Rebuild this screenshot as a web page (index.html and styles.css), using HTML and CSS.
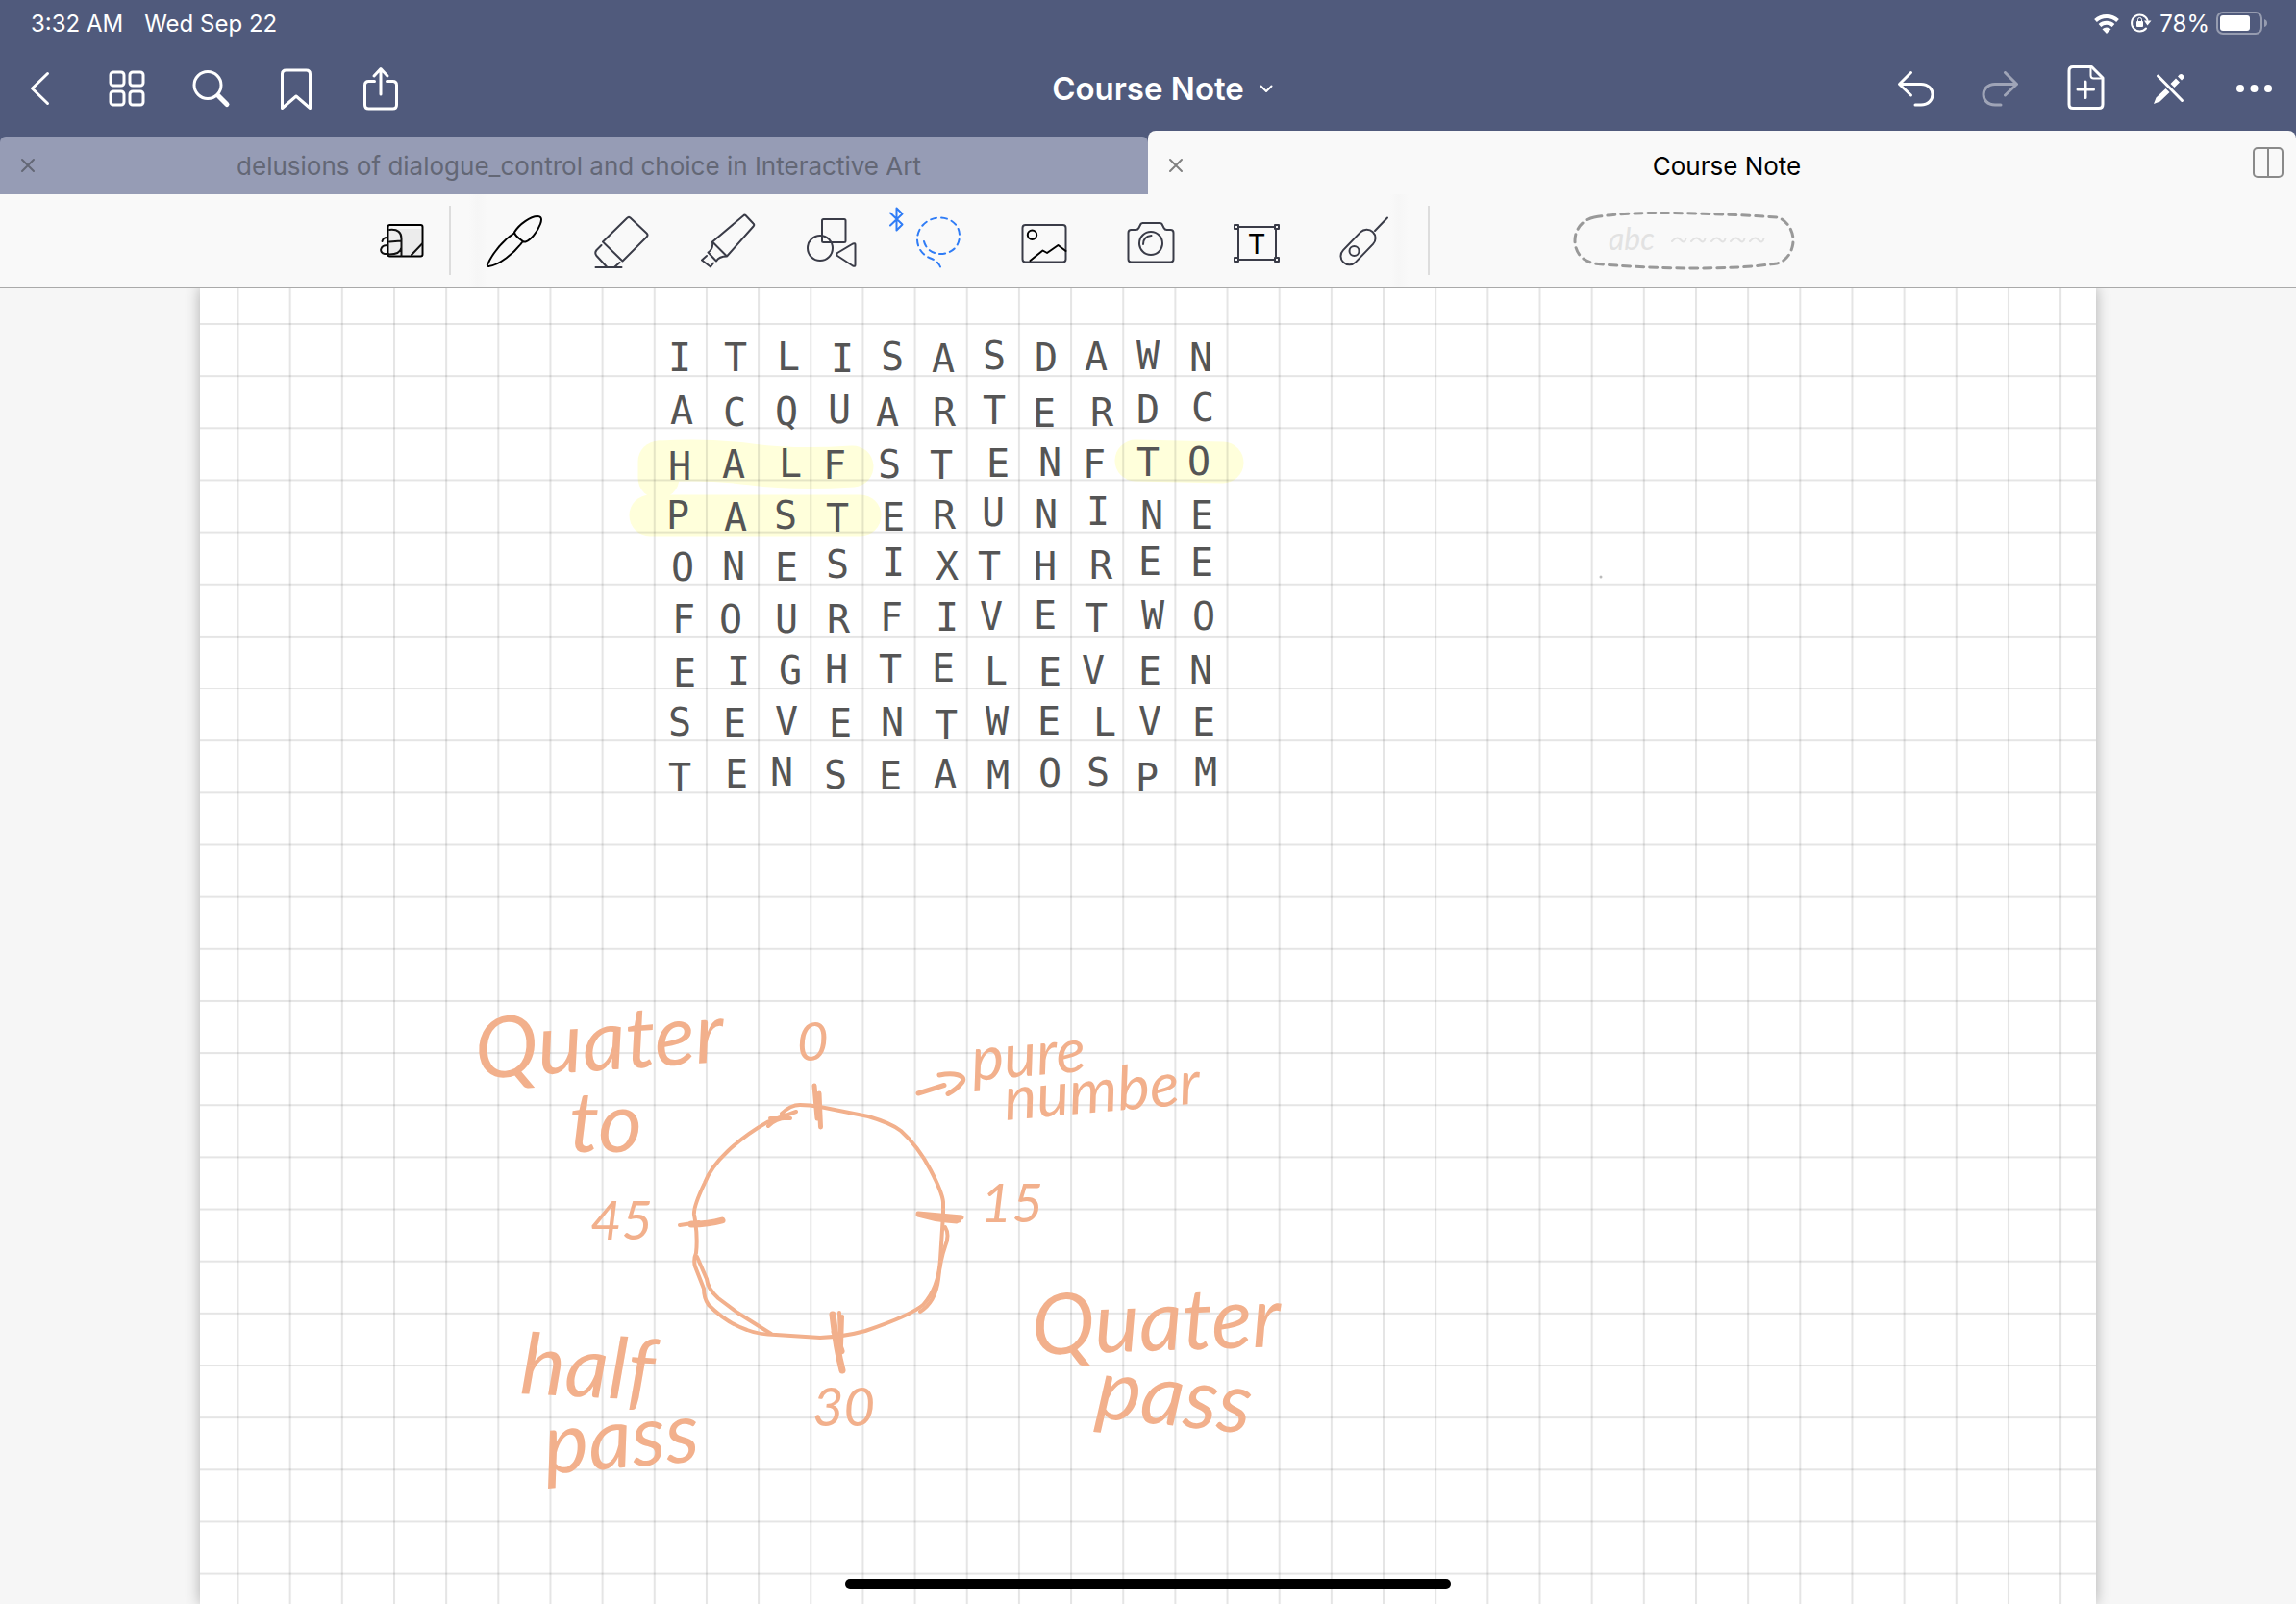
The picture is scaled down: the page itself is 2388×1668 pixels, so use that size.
FILE: index.html
```html
<!DOCTYPE html>
<html lang="en">
<head>
<meta charset="utf-8">
<meta name="viewport" content="width=device-width, initial-scale=1">
<title>Course Note</title>
<link rel="stylesheet" href="styles.css">
</head>
<body>
<header class="top">
  <div class="status">
    <span>3:32 AM</span>
    <span>Wed Sep 22</span>
    <span class="status-right">
      <svg class="wifi" viewBox="2178 13 29 21" aria-hidden="true">
        <path class="bar" d="M2180.500 20.500a17 17 0 0 1 23 0M2185 25.500a10.500 10.500 0 0 1 14 0"/>
        <path class="solid" d="M2192 34l-4.500-4.700a6.500 6.500 0 0 1 9 0z"/>
      </svg>
      <svg class="lock" viewBox="2214 12 24 24" aria-hidden="true">
        <path class="ring" d="M2233.500 21a8.500 8.500 0 1 0-1.500 8.500"/>
        <path class="solid" d="M2230 21.500h7.500l-4 5z"/>
        <rect class="solid" x="2222" y="22" width="7" height="6" rx="1"/>
        <path class="shackle" d="M2223.500 22v-1.500a2 2 0 0 1 4 0v1.500"/>
      </svg>
      <span class="percent">78%</span>
      <svg class="battery" viewBox="2304 11 56 26" aria-hidden="true">
        <rect class="shell" x="2306" y="13" width="46" height="22" rx="6"/>
        <rect class="solid" x="2309" y="16" width="31" height="16" rx="3"/>
        <path class="nub" d="M2355 20q3 1 3 4t-3 4z"/>
      </svg>
    </span>
  </div>
  <nav class="nav">
    <div class="group">
      <button class="nav-button" aria-label="Back"><svg viewBox="16 64 56 56"><path d="M49.500 76.500L33.500 92l16 15.500"/></svg></button>
      <button class="nav-button" aria-label="Thumbnails"><svg viewBox="104 64 56 56"><rect x="115" y="75" width="14" height="14" rx="3"/><rect x="135" y="75" width="14" height="14" rx="3"/><rect x="115" y="95" width="14" height="14" rx="3"/><rect x="135" y="95" width="14" height="14" rx="3"/></svg></button>
      <button class="nav-button" aria-label="Search"><svg viewBox="192 64 56 56"><circle cx="216" cy="88.500" r="14"/><path class="heavy" d="M227 99.500l9 9"/></svg></button>
      <button class="nav-button" aria-label="Bookmark"><svg viewBox="280 64 56 56"><path d="M293.500 112.500V77q0-4 4-4h21q4 0 4 4v35.500l-14.500-12.500z"/></svg></button>
      <button class="nav-button" aria-label="Share"><svg viewBox="368 64 56 56"><path d="M389.500 84.500h-6q-4 0-4 4v20.500q0 4 4 4h25q4 0 4-4v-20.500q0-4-4-4h-6M396 98V72M389 79l7-7.500 7 7.500"/></svg></button>
    </div>
    <button class="doc-title">Course Note
      <svg viewBox="1309 84 14 16" aria-hidden="true"><path d="M1310.500 89.500l5.500 5.500 5.500-5.500"/></svg>
    </button>
    <div class="group group-end">
      <button class="nav-button" aria-label="Undo"><svg viewBox="1964 64 56 56"><path d="M1987.500 75.500L1975.500 87.500l12 11.500M1976 87.500h22c16 0 16 21.500 0 21.500h-6"/></svg></button>
      <button class="nav-button" aria-label="Redo" disabled><svg viewBox="2052 64 56 56"><path d="M2085.500 75.500l12 12-12 11.500M2097 87.500h-22c-16 0-16 21.500 0 21.500h6"/></svg></button>
      <button class="nav-button" aria-label="Add page"><svg viewBox="2140 64 56 56"><path d="M2175.500 69.500h-19.500q-4 0-4 4v35q0 4 4 4h27q4 0 4-4v-27.500zM2169 85v16.500M2161 93h16.500"/><path class="thin" d="M2174.500 70v8.500q0 3 3 3h9"/></svg></button>
      <button class="nav-button" aria-label="Read-only mode"><svg viewBox="2228 64 56 56"><path d="M2244.500 79l25 25.500"/><path class="solid" d="M2252.500 92l4 4-10 9.500-6.500 2.500 2.500-6.500zM2263 81.500l4 4-5.500 5.500-4-4zM2265 79.500q3-4 5.500-1.500t-1.500 5.500z"/></svg></button>
      <button class="nav-button" aria-label="More"><svg viewBox="2316 64 56 56"><g class="solid"><circle cx="2330" cy="92" r="4"/><circle cx="2344.500" cy="92" r="4"/><circle cx="2359" cy="92" r="4"/></g></svg></button>
    </div>
  </nav>
  <div class="tabs">
    <div class="tab">
      <button class="tab-close" aria-label="Close tab"><svg viewBox="0 0 16 16"><path d="M2 2l12 12M14 2L2 14"/></svg></button>
      <a class="tab-name" href="#delusions">delusions of dialogue_control and choice in Interactive Art</a>
    </div>
    <div class="tab tab-current">
      <button class="tab-close" aria-label="Close tab"><svg viewBox="0 0 16 16"><path d="M2 2l12 12M14 2L2 14"/></svg></button>
      <a class="tab-name" href="#course" aria-current="page">Course Note</a>
      <button class="split" aria-label="Split view"><svg viewBox="0 0 32 32"><rect x="1" y="1" width="30" height="30" rx="4"/><path d="M16 1v30"/></svg></button>
    </div>
  </div>
</header>

<div class="toolbar">
  <div class="tools">
    <button class="tool mode" aria-label="Zoom window"><svg viewBox="385 218 64 64">
      <rect class="pane" x="404" y="238" width="33" height="28"/>
      <g class="dark"><rect x="402.500" y="234" width="36" height="32.500" rx="2"/></g>
      <path class="hair" d="M396.500 251q1-4 5-4M402 255c-8 0-9 8-3 9h4M404 239c9-1 12.500 3 12.500 9v18M404 251.500l12-1M404 264.500q11 0 12.500-7M427 265l11-11.500"/>
    </svg></button>
    <span class="divider"></span>
    <div class="strip">
      <button class="tool" aria-label="Pen"><svg viewBox="504 218 64 64"><path class="dark" d="M508.500 274.500C512 265 524 250 535 243M509 277c11-1 27-14 35-25M509 277q-2-1-.5-3M536 241.500C541 233 553 225 560 225q6 0 3 8c-3 8-10 17-15.500 18.500q-2 .5-4-1.500-7-5-7.500-8.500z"/></svg></button>
      <button class="tool" aria-label="Eraser"><svg viewBox="617 218 64 64"><path d="M655 227l-25 24.500 20.500 20 25-25q2-2 0-4l-17-16q-2-1.500-3.500.5zM628.500 255l-5 5q-2.500 3 0 6l10.500 11.500M647.500 273l-5 4.500M622.500 278h27"/></svg></button>
      <button class="tool" aria-label="Highlighter"><svg viewBox="725 218 64 64"><path d="M774 224.500l-32 27 15 15 27.500-31q1.500-1.500 0-3l-8-8.500q-1-1-2.500.5zM742 252q1 7-4.500 10.500l8.500 9q3-5 11-5M736 266l-5 4.500 9 7 3-4"/></svg></button>
      <button class="tool" aria-label="Shapes"><svg viewBox="837 218 64 64"><rect x="857" y="228" width="24.500" height="24" rx="1.500"/><circle cx="855" cy="258" r="13"/><path d="M889 253.500l-16 9.500q-1.500 1.500 0 3l16 10.500q2.500 1 2.500-1v-21q0-2-2.500-1z"/></svg></button>
      <button class="tool active" aria-label="Lasso">
        <svg viewBox="947 218 64 64"><path class="lasso" d="M963 251C965 259 972 264 980 264c12 0 20-8 20-19s-9-18.500-20.500-18.500c-13 0-23.500 10-23.500 22.500 0 9 6 17 15 20q7 3 9 8.500"/></svg>
        <svg class="bluetooth" viewBox="925 214 17 28" aria-hidden="true"><path d="M927 221.500l12.500 12-6 6v-23l6 6-12.500 12"/></svg>
      </button>
      <button class="tool" aria-label="Image"><svg viewBox="1056 218 64 64"><rect x="1064.500" y="234" width="45" height="38.500" rx="3"/><g class="dark"><circle cx="1074.500" cy="244.300" r="4.700"/><path d="M1072.500 271l13-10.500 4.500 2.500 11.500-8 8 6"/></g></svg></button>
      <button class="tool" aria-label="Camera"><svg viewBox="1167 218 64 64"><path d="M1177.500 239h5q2 0 3-2l2-4q.5-1 2-1h18q1.500 0 2 1l2 4q1 2 3 2h4q3 0 3 3v27.500q0 3-3 3h-41q-3 0-3-3V242q0-3 3-3z"/><circle cx="1198" cy="253" r="12"/><path d="M1190 254q0-8 8.500-9"/></svg></button>
      <button class="tool" aria-label="Text"><svg viewBox="1277 218 64 64"><rect x="1289" y="236" width="39" height="34"/><g class="knob"><rect x="1285" y="234" width="4" height="4"/><rect x="1327" y="234" width="4" height="4"/><rect x="1285" y="268" width="4" height="4"/><rect x="1327" y="268" width="4" height="4"/></g><text class="tee" x="1308" y="264">T</text></svg></button>
      <button class="tool" aria-label="Laser pointer"><svg viewBox="1388 218 64 64"><rect x="1391.500" y="248" width="44" height="18" rx="9" transform="rotate(-46 1413.500 257)"/><circle cx="1409.500" cy="261" r="5"/><path d="M1431 240l13-13.500"/></svg></button>
    </div>
    <span class="divider"></span>
    <svg class="preset" viewBox="1632 216 236 68" role="img" aria-label="Lasso selection">
      <path class="loop" d="M1657 226c23-4 48-4.500 71-4.500 40 0 90 2.500 120 4.500 9 3 16 13 16 24s-7 22-17 24c-27 4-57 5-87 5-34 0-73-2-103-5-13-3-20-12-20-24s9-22 20-24z"/>
      <text x="1672" y="260">abc</text>
      <path class="waves" d="M1738 251q5-6 9-1.500t5.500-1.500M1758 251q5-6 9-1.500t5.500-1.500M1779 251q5-6 9-1.500t5.500-1.500M1799 251q5-6 9-1.500t5.500-1.500M1819 251q5-6 9-1.500t5.500-1.500"/>
    </svg>
  </div>
</div>

<main class="canvas">
  <div class="page">
    <svg class="ink" viewBox="208 299 1972 1369">
      <defs>
        <pattern id="columns" patternUnits="userSpaceOnUse" x="246.500" y="0" width="54.160" height="60"><rect class="rule" width="2" height="60"/></pattern>
        <pattern id="rows" patternUnits="userSpaceOnUse" x="0" y="336" width="60" height="54.150"><rect class="rule" width="60" height="2"/></pattern>
      </defs>
      <g class="marker">
        <path d="M687 480q50-3 95 3t105 2"/>
        <path d="M685 480v17"/>
        <path d="M676 536h219"/>
        <path d="M1181 479l91 2"/>
      </g>
      <rect x="208" y="299" width="1972" height="1369" fill="url(#columns)"/>
      <rect x="208" y="299" width="1972" height="1369" fill="url(#rows)"/>

      <g class="letters">
        <text x="707 765 820 876 928 981 1034 1088 1140 1194 1249" y="386 386 385 387 385 387 384 386 385 384 386">ITLISASDAWN</text>
        <text x="709 764 818 873 923 982 1034 1086 1146 1194 1251" y="441 443 442 440 443 443 441 444 443 440 438">ACQUARTERDC</text>
        <text x="707 763 822 868 925 979 1038 1092 1138 1194 1247" y="499 497 496 498 497 498 496 495 497 495 494">HALFSTENFTO</text>
        <text x="705 765 817 871 929 982 1033 1088 1142 1198 1250" y="550 552 550 553 552 550 547 549 546 550 550">PASTERUNINE</text>
        <text x="710 763 818 871 929 985 1029 1087 1145 1196 1250" y="604 603 604 601 599 603 603 603 602 598 599">ONESIXTHREE</text>
        <text x="711 760 818 872 927 985 1031 1087 1140 1199 1252" y="658 658 658 658 656 656 655 654 657 654 655">FOURFIVETWO</text>
        <text x="712 768 822 870 926 981 1036 1092 1137 1196 1249" y="714 712 711 710 710 709 712 713 711 712 711">EIGHTELEVEN</text>
        <text x="707 764 818 874 928 984 1037 1091 1149 1196 1252" y="765 766 764 766 765 768 764 764 765 764 765">SEVENTWELVE</text>
        <text x="707 766 813 869 926 983 1038 1092 1142 1193 1254" y="823 819 817 820 821 819 820 818 817 823 817">TENSEAMOSPM</text>
      </g>

      <g class="dial">
        <path class="w4" d="M813 1158Q822 1149 832 1149Q842 1149 853 1151L903 1161Q927 1168 937 1176Q955 1192 968 1217Q980 1240 981 1250V1263L978 1310Q976 1340 960 1357Q947 1368 900 1384Q878 1390 853 1391L807 1388Q790 1388 777 1383Q756 1376 737 1357Q732 1350 732 1340L723 1317Q721 1310 724 1303Q726 1285 722 1263Q721 1255 733 1230Q739 1214 757 1197Q775 1180 798 1167L828 1156"/>
        <path class="w4" d="M725 1307l10 23q1 10 12 20l20 15 35 22M983 1276q5 8 0 20-5 14-7 34-3 24-19 34M799 1171q10-10 23-8M801 1163h18"/>
        <path class="w5" d="M847 1129l3 34M852 1137l1.500 35M955 1262l45 4M955 1263q20 6 40 7M965 1264l32 5"/>
        <path class="w4" d="M707 1274l20-3M873 1365l1 30M876 1369l-1 30"/>
        <path class="w6" d="M719 1273q18 0 32-4M866 1367q4 35 10 58M868 1385l7 20"/>
      </g>
      <path class="arrow" d="M955 1137l27-8.500M977 1118c15-3 28 0 24 7q-5 7-15 12.500"/>

      <g class="words">
        <text class="size-l" x="496" y="1122" transform="rotate(-4 496 1122)">Quater</text>
        <text class="size-l" x="592" y="1198">to</text>
        <text class="size-s" x="1012" y="1124" transform="rotate(-5 1012 1124)">pure</text>
        <text class="size-s" x="1046" y="1165" transform="rotate(-5 1046 1165)">number</text>
        <text class="size-l" x="540" y="1449" transform="rotate(3 540 1449)">half</text>
        <text class="size-l" x="568" y="1533" transform="rotate(-5 568 1533)">pass</text>
        <text class="size-l" x="1074" y="1409" transform="rotate(-2 1074 1409)">Quater</text>
        <text class="size-l" x="1138" y="1474" transform="rotate(6 1138 1474)">pass</text>
      </g>
      <g class="numbers">
        <text x="829" y="1103">0</text>
        <text x="1020" y="1271">15</text>
        <text x="845" y="1483">30</text>
        <text x="614" y="1289">45</text>
      </g>
      <circle class="speck" cx="1665" cy="600" r="1.500"/>
    </svg>
  </div>
</main>
<div class="home-bar"></div>
</body>
</html>
```
FILE: styles.css
```css
* { box-sizing: border-box; }

body {
  margin: 0;
  min-height: 100vh;
  display: flex;
  flex-direction: column;
  position: relative;
  overflow: hidden;
  background: #f6f6f6;
  font-family: Inter, "Liberation Sans", sans-serif;
}

button {
  border: 0;
  padding: 0;
  background: none;
  font: inherit;
  color: inherit;
}

svg {
  display: block;
  fill: none;
  stroke-linecap: round;
  stroke-linejoin: round;
}

/* Header */
.top {
  background: #505a7c;
  color: #fff;
}

.status {
  height: 48px;
  padding: 0 28px 0 32px;
  display: flex;
  align-items: center;
  gap: 22px;
  font-size: 24px;
}

.status-right {
  margin-left: auto;
  display: flex;
  align-items: center;
  gap: 8px;
}

.wifi { width: 29px; height: 21px; }
.lock { width: 24px; height: 24px; }
.battery { width: 56px; height: 26px; margin-left: -2px; }
.solid { fill: #fff; stroke: none; }
.bar { stroke: #fff; stroke-width: 4; stroke-linecap: butt; }
.ring { stroke: #fff; stroke-width: 2; }
.shackle { stroke: #fff; stroke-width: 1; }
.shell { stroke: #969cb0; stroke-width: 2; }
.nub { fill: #969cb0; }

.nav {
  height: 88px;
  display: grid;
  grid-template-columns: 1fr auto 1fr;
}

.group { display: flex; }
.group-end { justify-content: flex-end; }

.nav-button {
  width: 88px;
  display: grid;
  place-items: center;
}

.nav-button svg {
  width: 56px;
  height: 56px;
  stroke: #fff;
  stroke-width: 3;
}

.nav-button .solid { stroke: none; }
.nav-button .thin { stroke-width: 2; }
.nav-button .heavy { stroke-width: 5; }
.nav-button:disabled { opacity: .45; }

.doc-title {
  display: flex;
  align-items: center;
  gap: 16px;
  padding-left: 30px;
  font-size: 33px;
  font-weight: 600;
}

.doc-title svg {
  width: 14px;
  height: 16px;
  stroke: #fff;
  stroke-width: 2;
}

/* Tabs */
.tabs {
  height: 66px;
  display: grid;
  grid-template-columns: 1fr 1fr;
  align-items: end;
}

.tab {
  height: 60px;
  display: grid;
  grid-template-columns: 58px 1fr 48px;
  align-items: center;
  border-radius: 6px 6px 0 0;
  background: #969cb5;
  color: #636775;
}

.tab-current {
  height: 66px;
  padding-top: 6px;
  border-radius: 8px 8px 0 0;
  background: #f9f9f9;
  color: #000;
}

.tab-name {
  color: inherit;
  font-size: 26px;
  text-align: center;
  text-decoration: none;
}

.tab-close { justify-self: center; }

.tab-close svg {
  width: 16px;
  height: 16px;
  stroke: #636775;
  stroke-width: 2;
}

.tab-current .tab-close svg { stroke: #808080; }

.split {
  justify-self: end;
  margin-right: 13px;
}

.split svg {
  width: 32px;
  height: 32px;
  margin-bottom: 6px;
  stroke: #8a8a8a;
  stroke-width: 2;
}

/* Toolbar */
.toolbar {
  display: flex;
  justify-content: center;
  background: #f9f9f9;
  border-bottom: 1px solid #aaa;
}

.tools {
  height: 96px;
  width: 1640px;
  display: flex;
  align-items: center;
}

.tool {
  flex: 1;
  height: 96px;
  display: grid;
  place-items: center;
  position: relative;
}

.tool svg {
  width: 64px;
  height: 64px;
  stroke: #3a3c48;
  stroke-width: 2;
}

.tool.mode {
  flex: none;
  width: 93px;
  padding-right: 6px;
}

.tool .dark { stroke: #000; }
.pane { fill: #ececec; stroke: none; }
.hair { stroke: #111; }
.knob { fill: #f9f9f9; }

.tee {
  fill: #000;
  stroke: none;
  font-size: 29px;
  text-anchor: middle;
}

.lasso {
  stroke: #2f7cf6;
  stroke-dasharray: 6 5;
}

.tool .bluetooth {
  position: absolute;
  top: 12px;
  left: 2px;
  width: 17px;
  height: 28px;
  stroke: #2f7cf6;
}

.divider {
  width: 2px;
  height: 72px;
  background: #ddd;
}

.strip {
  width: 1016px;
  display: flex;
  padding: 0 11px;
  background: linear-gradient(90deg, transparent 18px, #f6f6f6 28px, transparent 38px, transparent 976px, #f6f6f6 986px, transparent 996px);
}

.preset {
  width: 236px;
  height: 68px;
  margin: 0 auto;
}

.loop {
  stroke: #999;
  stroke-width: 3;
  stroke-dasharray: 8 6;
}

.waves { stroke: #e2e2e2; stroke-width: 2; }

.preset text {
  fill: #e2e2e2;
  font: italic 32px Lato, sans-serif;
}

/* Note page */
.canvas {
  flex: 1;
  padding: 0 208px;
}

.page {
  background: #fff;
  box-shadow: 0 0 14px rgba(0, 0, 0, .3);
  clip-path: inset(0 -20px);
}

.ink { width: 100%; height: auto; }
.rule { fill: #000; fill-opacity: .1; }
.marker { stroke: #ffffdb; stroke-width: 43; }

.letters {
  fill: #555;
  font: 40px "DejaVu Sans Mono", monospace;
  text-anchor: middle;
}

.dial, .arrow { stroke: #f2b08c; }
.arrow { stroke-width: 5; }
.w4 { stroke-width: 4; }
.w5 { stroke-width: 5; }
.w6 { stroke-width: 7; }

.words, .numbers {
  fill: #f2b08c;
  font-family: Lato, sans-serif;
}

.words { font-style: italic; }
.numbers { font-size: 56px; font-style: italic; }
.size-s { font-size: 64px; }
.size-l { font-size: 88px; }
.speck { fill: #bbb; }

.home-bar {
  position: absolute;
  left: 50%;
  bottom: 16px;
  width: 630px;
  height: 10px;
  margin-left: -315px;
  border-radius: 5px;
  background: #000;
}
```
